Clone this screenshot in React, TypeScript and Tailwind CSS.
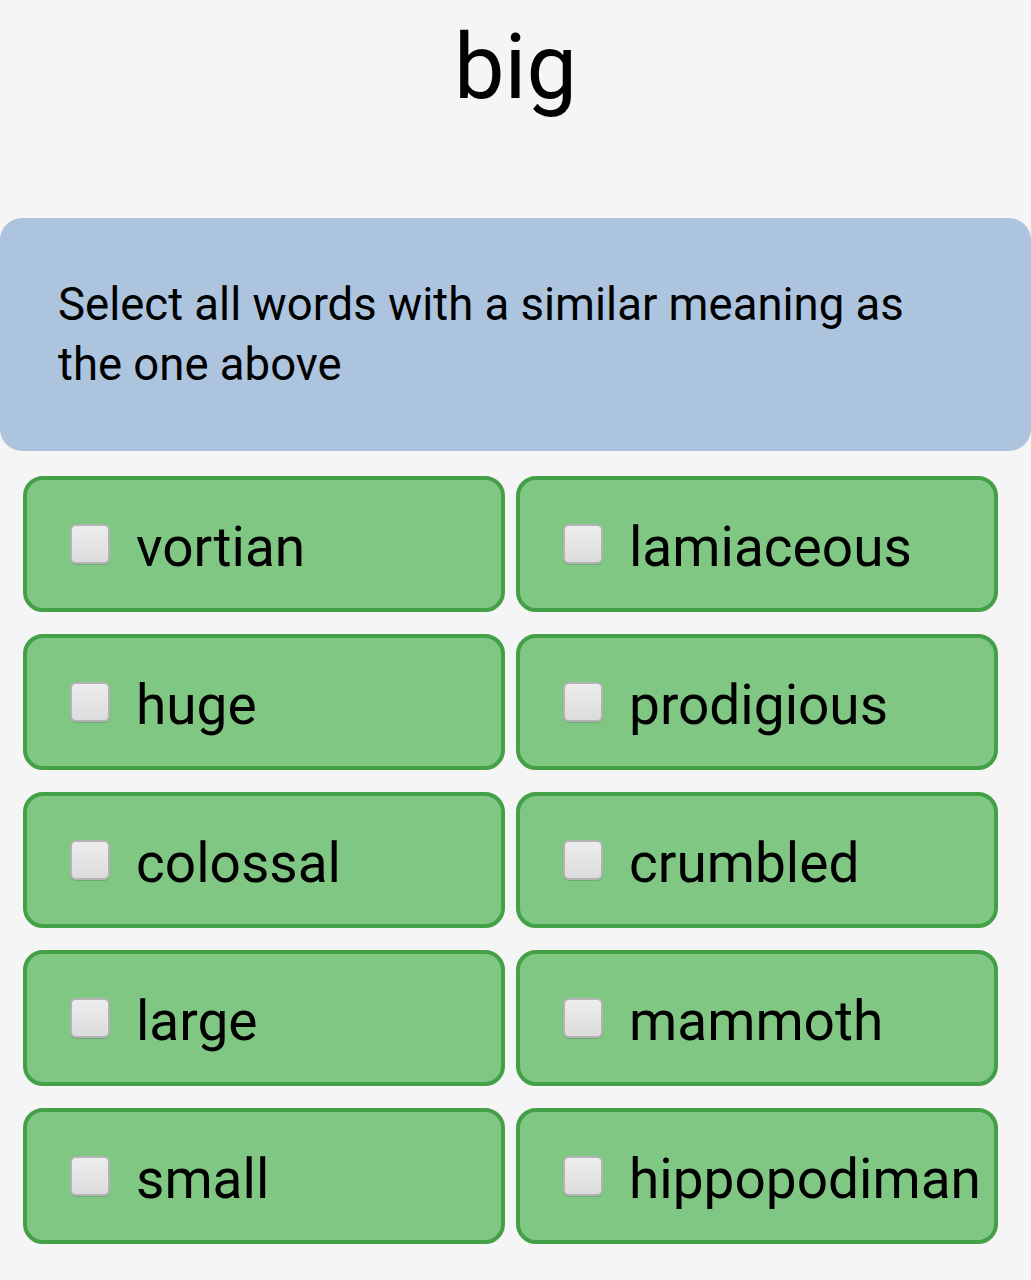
const words = [
  'vortian',
  'lamiaceous',
  'huge',
  'prodigious',
  'colossal',
  'crumbled',
  'large',
  'mammoth',
  'small',
  'hippopodiman',
]

function Box() {
  return (
    <span className="w-[40px] h-[40px] shrink-0 rounded-[6px] border-2 border-[#b3b3b3] bg-gradient-to-b from-[#ededed] to-[#dcdcdc] shadow-[0_1px_1px_rgba(0,0,0,0.15)]" />
  )
}

export default function App() {
  return (
    <div className="min-h-[1280px] bg-[#f5f5f5] font-['Roboto',sans-serif] text-black">
      <h1 className="pt-[15px] text-center text-[90px] leading-[105px] font-normal">big</h1>

      <div className="mt-[98px] rounded-[22px] bg-[#adc4de] pl-[58px] pr-[80px] pt-[57px] pb-[56px]">
        <p className="text-[45.5px] leading-[60px]">Select all words with a similar meaning as the one above</p>
      </div>

      <div className="mt-[25px] grid grid-cols-2 gap-x-[11px] gap-y-[22px] pl-[23px] pr-[33px]">
        {words.map((w) => (
          <label
            key={w}
            className="flex h-[136px] items-center gap-[26px] rounded-[20px] border-4 border-[#43a047] bg-[#81c784] pl-[43px] overflow-hidden"
          >
            <Box />
            <span className="pt-[6px] text-[55px] leading-none whitespace-nowrap">{w}</span>
          </label>
        ))}
      </div>
    </div>
  )
}
